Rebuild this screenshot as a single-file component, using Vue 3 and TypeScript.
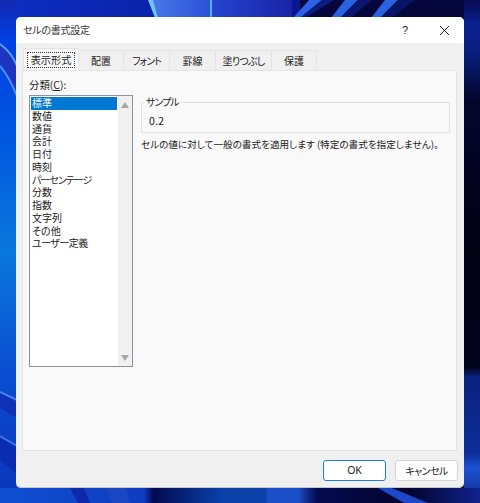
<script setup lang="ts">
const tabs: string[] = ['表示形式', '配置', 'フォント', '罫線', '塗りつぶし', '保護']
const categories: string[] = ['標準', '数値', '通貨', '会計', '日付', '時刻', 'パーセンテージ', '分数', '指数', '文字列', 'その他', 'ユーザー定義']
</script>

<template>
  <div class="desktop">
    <svg class="wallpaper" width="480" height="503" viewBox="0 0 480 503" aria-hidden="true">
      <defs>
        <linearGradient id="base" x1="0" y1="0" x2="1" y2="0">
          <stop offset="0" stop-color="#0a3fd0" />
          <stop offset="0.3" stop-color="#0a2aa8" />
          <stop offset="0.6" stop-color="#0a1f90" />
          <stop offset="0.85" stop-color="#020430" />
          <stop offset="1" stop-color="#02031f" />
        </linearGradient>
        <linearGradient id="top" x1="0" y1="0" x2="1" y2="0">
          <stop offset="0" stop-color="#0c2fc4" />
          <stop offset="1" stop-color="#0a1690" />
        </linearGradient>
        <linearGradient id="petal" x1="0" y1="0" x2="1" y2="0">
          <stop offset="0" stop-color="#4a78e8" />
          <stop offset="1" stop-color="#2a50d8" />
        </linearGradient>
        <linearGradient id="fade" x1="0" y1="0" x2="1" y2="0">
          <stop offset="0" stop-color="#2444d0" />
          <stop offset="1" stop-color="#1a24a8" />
        </linearGradient>
        <linearGradient id="left" x1="0" y1="0" x2="0" y2="1">
          <stop offset="0" stop-color="#1428b0" />
          <stop offset="0.08" stop-color="#0040e4" />
          <stop offset="0.22" stop-color="#0050e0" />
          <stop offset="0.5" stop-color="#0a78dc" />
          <stop offset="0.75" stop-color="#0a4cd0" />
          <stop offset="1" stop-color="#0a34b8" />
        </linearGradient>
        <linearGradient id="bottom" x1="0" y1="0" x2="1" y2="0">
          <stop offset="0" stop-color="#0e50d0" />
          <stop offset="0.3" stop-color="#0f3cc0" />
          <stop offset="0.32" stop-color="#020a50" />
          <stop offset="0.46" stop-color="#0a40a8" />
          <stop offset="0.55" stop-color="#0a40a8" />
          <stop offset="0.56" stop-color="#1c50c8" />
          <stop offset="0.62" stop-color="#1c50c8" />
          <stop offset="0.66" stop-color="#030a50" />
          <stop offset="0.85" stop-color="#02042c" />
          <stop offset="1" stop-color="#10228c" />
        </linearGradient>
        <linearGradient id="right" x1="0" y1="0" x2="0" y2="1">
          <stop offset="0" stop-color="#060a50" />
          <stop offset="0.05" stop-color="#0a2090" />
          <stop offset="0.1" stop-color="#0a1f80" />
          <stop offset="0.2" stop-color="#03062c" />
          <stop offset="0.5" stop-color="#010214" />
          <stop offset="0.73" stop-color="#02041e" />
          <stop offset="0.75" stop-color="#0a2280" />
          <stop offset="0.9" stop-color="#0c2e98" />
          <stop offset="0.93" stop-color="#1e50d0" />
          <stop offset="1" stop-color="#0c2a90" />
        </linearGradient>
      </defs>
      <rect width="480" height="503" fill="url(#base)" />
      <rect x="0" y="0" width="300" height="18" fill="url(#top)" />
      <rect x="300" y="0" width="180" height="18" fill="#04063c" />
      <polygon points="152,0 211,0 211,18 157,18" fill="url(#petal)" />
      <polygon points="148,0 153,0 158,18 155,18" fill="#6cc4f0" />
      <rect x="210" y="0" width="2.5" height="18" fill="#4fb4ec" />
      <rect x="212" y="0" width="80" height="18" fill="url(#fade)" />
      <polygon points="309,0 322,0 300,18 293,18" fill="#2c62e4" />
      <polygon points="322,0 334,0 305,18 300,18" fill="#0a1c80" />
      <polygon points="345,0 358,0 340,18 331,18" fill="#2a62e0" />
      <polygon points="358,0 372,0 350,18 340,18" fill="#0a1670" />
      <polygon points="385,0 398,0 380,18 371,18" fill="#2a62e0" />
      <polygon points="398,0 415,0 392,18 380,18" fill="#081468" />
      <rect x="0" y="0" width="17" height="503" fill="url(#left)" />
      <path d="M0 44 C7 47 13 56 17 66 L17 96 C12 88 6 72 0 62 Z" fill="#1c34c0" />
      <path d="M0 44 C7 49 13 56 17 66" stroke="#5a9af0" stroke-width="2" fill="none" />
      <path d="M0 66 C7 74 12 84 17 96" stroke="#4a90ea" stroke-width="2" fill="none" />
      <path d="M0 392 L17 400 L17 418 L0 408 Z" fill="#1030b8" />
      <path d="M0 392 L17 400" stroke="#4a80e4" stroke-width="2" />
      <path d="M0 436 L17 446 L17 474 L0 460 Z" fill="#0a2cb0" />
      <path d="M0 436 L17 446" stroke="#3e74e0" stroke-width="2" />
      <rect x="464" y="0" width="16" height="503" fill="url(#right)" />
      <rect x="0" y="488" width="480" height="15" fill="url(#bottom)" />
      <polygon points="70,488 84,488 90,503 78,503" fill="#0e28ac" />
      <polygon points="105,488 125,488 130,503 112,503" fill="#1a46c4" />
      <polygon points="378,488 392,488 428,503 404,503" fill="#1a48c8" />
    </svg>

    <section class="dialog">
      <header class="titlebar">
        <span class="title">セルの書式設定</span>
        <div class="controls">
          <span class="help">?</span>
          <svg class="close" width="11" height="11" viewBox="0 0 11 11" aria-label="閉じる">
            <path d="M1 1 L10 10 M10 1 L1 10" stroke="#222" stroke-width="1" fill="none" />
          </svg>
        </div>
      </header>

      <div class="body">
        <nav class="tabs">
          <div
            v-for="(tab, index) in tabs"
            :key="tab"
            class="tab"
            :class="[`tab-${index}`, { active: index === 0 }]"
          >
            <span class="tab-label">{{ tab }}</span>
          </div>
        </nav>

        <div class="panel">
          <div class="category">
            <label class="category-label">分類(<u>C</u>):</label>
            <div class="listbox">
              <ul class="items">
                <li v-for="(item, index) in categories" :key="item" :class="{ selected: index === 0 }">{{ item }}</li>
              </ul>
              <div class="scrollbar">
                <span class="arrow up"></span>
                <span class="arrow down"></span>
              </div>
            </div>
          </div>

          <div class="details">
            <fieldset class="sample">
              <legend>サンプル</legend>
              <div class="sample-value">0.2</div>
            </fieldset>
            <p class="description">セルの値に対して一般の書式を適用します (特定の書式を指定しません)。</p>
          </div>
        </div>

        <footer class="footer">
          <button class="btn primary">OK</button>
          <button class="btn">キャンセル</button>
        </footer>
      </div>
    </section>
  </div>
</template>

<style>
html,
body {
  margin: 0;
  padding: 0;
}
</style>

<style scoped>
.desktop {
  position: relative;
  width: 480px;
  height: 503px;
  overflow: hidden;
  background: #02031f;
  padding: 17px 16px 15px;
  box-sizing: border-box;
  font-family: "Noto Sans CJK JP", "Noto Sans", sans-serif;
  font-feature-settings: "palt";
  font-size: 10px;
  color: #1a1a1a;
}
.wallpaper {
  position: absolute;
  left: 0;
  top: 0;
}
.dialog {
  position: relative;
  width: 448px;
  height: 471px;
  border-radius: 5px;
  overflow: hidden;
  background: #f0f0f0;
  box-shadow: inset 0 -1px 0 #c4c6cc;
  display: flex;
  flex-direction: column;
}
.titlebar {
  height: 26px;
  background: #ffffff;
  display: flex;
  align-items: center;
  justify-content: space-between;
  padding: 0 14px 0 7px;
  flex: none;
}
.title {
  font-size: 10px;
  letter-spacing: -0.25px;
  color: #333;
  line-height: 26px;
}
.controls {
  display: flex;
  align-items: center;
  gap: 31px;
}
.help {
  font-family: "Liberation Sans", sans-serif;
  font-size: 11px;
  color: #222;
}
.close {
  display: block;
}
.body {
  flex: 1;
  display: flex;
  flex-direction: column;
  padding: 6px 7px 0 6px;
  min-height: 0;
}
.tabs {
  display: flex;
  height: 21px;
  flex: none;
  padding-left: 1px;
}
.tab {
  box-sizing: border-box;
  height: 20px;
  margin-top: 1px;
  border: 1px solid #e4e4e4;
  border-left: none;
  border-bottom: none;
  background: #f0f0f0;
  display: flex;
  align-items: center;
  justify-content: center;
  font-size: 10px;
  color: #222;
}
.tab-0 { width: 56px; }
.tab-1 { width: 45px; }
.tab-2 { width: 46px; letter-spacing: -1px; }
.tab-3 { width: 46px; }
.tab-4 { width: 56px; letter-spacing: -0.8px; }
.tab-5 { width: 45px; }
.tab.active {
  height: 22px;
  margin-top: -1px;
  background: #f9f9f9;
  border: 1px solid #e4e4e4;
  border-bottom: none;
  position: relative;
  z-index: 1;
}
.active .tab-label {
  border: 1px dotted #333;
  padding: 0 3px;
  line-height: 14px;
  border-radius: 1px;
  font-size: 10.2px;
}
.panel {
  box-sizing: border-box;
  height: 381px;
  flex: none;
  background: #f9f9f9;
  border: 1px solid #e4e4e4;
  display: flex;
  padding: 5px 6px 0 6px;
  gap: 8px;
}
.category {
  width: 104px;
  flex: none;
}
.category-label {
  display: block;
  height: 19px;
  line-height: 18px;
  font-size: 10.4px;
  color: #222;
}
.listbox {
  box-sizing: border-box;
  height: 272px;
  border: 1px solid #8d919a;
  background: #fff;
  display: flex;
  padding: 1px 0 1px 1px;
}
.items {
  list-style: none;
  margin: 0;
  padding: 0;
  width: 86px;
  flex: none;
}
.items li {
  height: 12.75px;
  line-height: 12.75px;
  font-size: 10px;
  padding-left: 1px;
  color: #222;
  white-space: nowrap;
}
.items li:nth-child(7) {
  letter-spacing: -1px;
}
.items li:nth-child(12) {
  letter-spacing: -0.5px;
}
.items li.selected {
  background: #0078d4;
  color: #fff;
}
.scrollbar {
  flex: 1;
  margin: -1px 0 -1px 1px;
  background: #f0f0f0;
  display: flex;
  flex-direction: column;
  justify-content: space-between;
  align-items: center;
  padding: 6px 0 5px;
}
.arrow {
  width: 0;
  height: 0;
  border-left: 4px solid transparent;
  border-right: 4px solid transparent;
}
.arrow.up {
  border-bottom: 6px solid #a6a6a6;
}
.arrow.down {
  border-top: 6px solid #a6a6a6;
}
.details {
  flex: 1;
  min-width: 0;
  padding-top: 20px;
}
.sample {
  box-sizing: border-box;
  height: 37px;
  margin: 0;
  padding: 0 0 0 7px;
  border: 1px solid #e2e2e2;
}
.sample legend {
  padding: 0 1px;
  margin-left: -4px;
  font-size: 10px;
  letter-spacing: -1px;
  line-height: 12px;
  color: #222;
}
.sample-value {
  font-size: 10.5px;
  line-height: 14px;
  margin-top: 6px;
  letter-spacing: 0.3px;
  color: #222;
}
.description {
  margin: 4px 0 0;
  font-size: 9.6px;
  line-height: 14px;
  white-space: nowrap;
  color: #222;
}
.footer {
  display: flex;
  justify-content: flex-end;
  gap: 9px;
  padding-top: 9px;
  margin-right: -1px;
}
.btn {
  box-sizing: border-box;
  width: 63px;
  height: 21px;
  padding: 0;
  background: #fdfdfd;
  border: 1px solid #d4d4d4;
  border-radius: 3px;
  font-family: inherit;
  font-feature-settings: "palt";
  font-size: 10px;
  letter-spacing: -0.6px;
  line-height: 19px;
  color: #222;
}
.btn.primary {
  background: #fff;
  border: 1px solid #1d80d0;
  font-family: "Noto Sans", sans-serif;
  font-size: 10.5px;
  letter-spacing: 0;
}
</style>
